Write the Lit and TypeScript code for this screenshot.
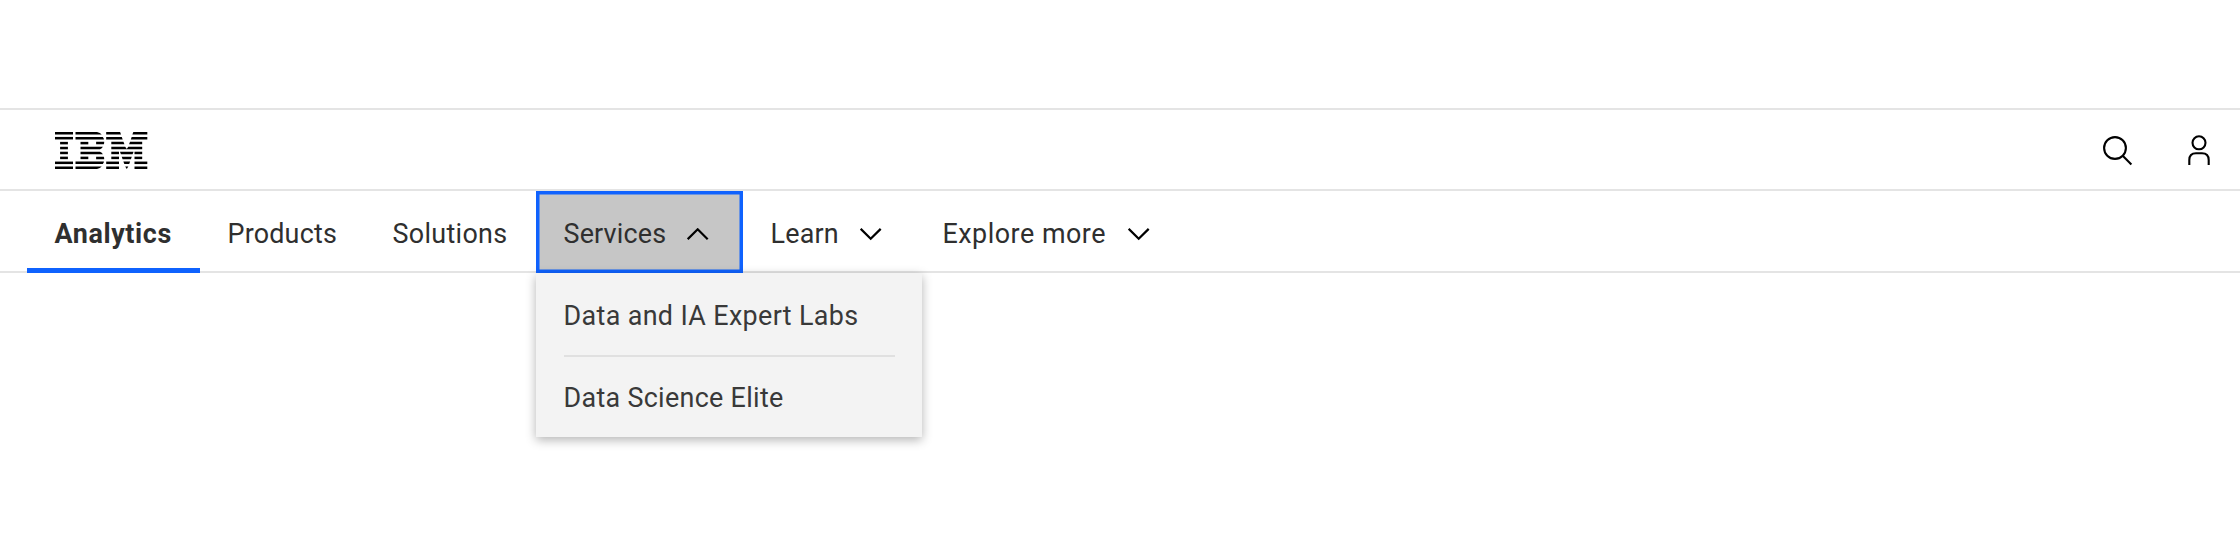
import { LitElement, html, svg, css } from "lit";
import { customElement, property } from "lit/decorators.js";

// Stripes of the wordmark: [row, left, right], in logo pixels.
const STRIPES: [number, number, number][] = [
  [0, 0, 18], [1, 0, 18], [2, 5.1, 12.9], [3, 5.1, 12.9], [4, 5.1, 12.9], [5, 5.1, 12.9], [6, 0, 18], [7, 0, 18],
  [2, 25.5, 33.3], [5, 25.5, 33.3],
];
const SHAPES = [
  "M20.5 0H42Q45.3 .6 46.7 2.5H20.5Z",
  "M20.5 4.93H47.8Q48.9 6.2 48.9 7.43H20.5Z",
  "M41.1 9.86H49.2Q49.3 11.4 48.8 12.36H41.1Z",
  "M25.5 14.79H47.9Q47 16.5 45 17.29H25.5Z",
  "M25.5 19.71H45Q47 20.5 47.9 22.21H25.5Z",
  "M41.1 24.64H48.8Q49.3 25.6 49.2 27.14H41.1Z",
  "M20.5 29.57H48.9Q48.9 30.8 47.8 32.07H20.5Z",
  "M20.5 34.5H46.7Q45.3 36.4 42 37H20.5Z",
  "M51.2 0H65.1L66 2.5H51.2Z", "M78.3 0H92.3V2.5H77.4Z",
  "M51.2 4.93H66.8L67.7 7.43H51.2Z", "M76.7 4.93H92.3V7.43H75.8Z",
  "M56.3 9.86H68.5L69.4 12.36H56.3Z", "M75 9.86H87.2V12.36H74.1Z",
  "M56.3 14.79H70.2L71.75 17L73.3 14.79H87.2V17.29H56.3Z",
  "M56.3 19.71H64V22.21H56.3Z", "M65 19.71H78.5L77.6 22.21H65.9Z", "M79.5 19.71H87.2V22.21H79.5Z",
  "M56.3 24.64H64V27.14H56.3Z", "M66.7 24.64H76.8L75.9 27.14H67.6Z", "M79.5 24.64H87.2V27.14H79.5Z",
  "M51.2 29.57H64V32.07H51.2Z", "M68.4 29.57H75.1L74.2 32.07H69.3Z", "M79.5 29.57H92.3V32.07H79.5Z",
  "M51.2 34.5H64V37H51.2Z", "M70.2 34.5H73.3L71.75 37Z", "M79.5 34.5H92.3V37H79.5Z",
];

type Item = { label: string; cls: string; menu?: boolean };
const ITEMS: Item[] = [
  { label: "Analytics", cls: "analytics current" },
  { label: "Products", cls: "products" },
  { label: "Solutions", cls: "solutions" },
  { label: "Services", cls: "services open", menu: true },
  { label: "Learn", cls: "learn", menu: true },
  { label: "Explore more", cls: "explore", menu: true },
];

@customElement("app-logo")
export class AppLogo extends LitElement {
  static styles = css`:host { display: block; } svg { display: block; }`;
  render() {
    return html`<svg width="93" height="37" viewBox="0 0 93 37" fill="#000">
      ${STRIPES.map(([r, a, b]) => svg`<rect x=${a} y=${r * 4.93} width=${b - a} height="2.5"/>`)}
      ${SHAPES.map((d) => svg`<path d=${d}/>`)}
    </svg>`;
  }
}

@customElement("app-chevron")
export class AppChevron extends LitElement {
  @property({ type: Boolean }) up = false;
  static styles = css`:host { display: block; } svg { display: block; }`;
  render() {
    return html`<svg width="22" height="13" viewBox="0 0 22 13" fill="none" stroke="#000" stroke-width="2.2">
      <path d=${this.up ? "M.7 11.2 10.7 1.3 20.7 11.2" : "M.7 .9 10.7 10.8 20.7 .9"}/>
    </svg>`;
  }
}

@customElement("app-root")
export class AppRoot extends LitElement {
  static styles = css`
    :host { display: block; height: 546px; background: #fff; overflow: hidden; color: #2f2f2f;
      font: 26.9px/32px Roboto, sans-serif; box-sizing: border-box; padding-top: 108px; }
    .bar { display: flex; box-sizing: border-box; height: 81px; border-top: 2px solid #e4e4e4; }
    .masthead { justify-content: space-between; padding: 22px 25px 0 54.6px; }
    .actions { display: flex; gap: 51px; padding-top: 3px; }
    .actions svg { display: block; }
    .nav { height: 84px; border-bottom: 2px solid #e4e4e4; padding-left: 27px; }
    .item { position: relative; display: flex; box-sizing: border-box; height: 82px; flex: none;
      padding: 27px 0 0 27.5px; white-space: nowrap; }
    .item app-chevron { margin-top: 10px; margin-left: auto; }
    .analytics { width: 173px; letter-spacing: .62px; }
    .current { font-weight: 700; border-bottom: 5px solid #0f62fe; }
    .products { width: 165px; letter-spacing: .2px; }
    .solutions { width: 171px; letter-spacing: .32px; }
    .services { width: 207px; padding-right: 33.6px; letter-spacing: .18px; }
    .learn { width: 172px; padding-right: 33px; letter-spacing: .2px; }
    .explore { width: 268px; padding-right: 33px; letter-spacing: .5px; }
    .open { background: #c6c6c6; box-shadow: inset 0 0 0 3.5px #0f62fe; }
    .menu { position: absolute; left: 0; top: 82px; box-sizing: border-box; width: 386px; height: 164px;
      background: #f3f3f3; color: #393939; box-shadow: 0 3px 10px rgba(0,0,0,.3); padding: 0 27.5px;
      letter-spacing: .36px; }
    .entry { height: 82px; box-sizing: border-box; padding-top: 27px; }
    .entry + .entry { border-top: 2px solid #e0e0e0; padding-top: 25px; letter-spacing: .31px; }
  `;
  render() {
    return html`
      <header class="bar masthead">
        <app-logo></app-logo>
        <div class="actions">
          <svg width="31" height="31" viewBox="0 0 31 31" fill="none" stroke="#000" stroke-width="2.1">
            <circle cx="13" cy="13" r="10.9"/><path d="M20.7 20.7 29.4 29.4"/>
          </svg>
          <svg width="31" height="31" viewBox="0 0 31 31" fill="none" stroke="#000" stroke-width="2.1">
            <circle cx="15" cy="7.8" r="6.5"/>
            <path d="M5.3 30V25Q5.3 18.2 12 18.2H18Q24.7 18.2 24.7 25V30"/>
          </svg>
        </div>
      </header>
      <nav class="bar nav">
        ${ITEMS.map((i) => html`<div class="item ${i.cls}">
          <span>${i.label}</span>
          ${i.menu ? html`<app-chevron ?up=${i.label === "Services"}></app-chevron>` : ""}
          ${i.label === "Services" ? html`<div class="menu">
            <div class="entry"><span>Data and IA Expert Labs</span></div>
            <div class="entry"><span>Data Science Elite</span></div>
          </div>` : ""}
        </div>`)}
      </nav>`;
  }
}
